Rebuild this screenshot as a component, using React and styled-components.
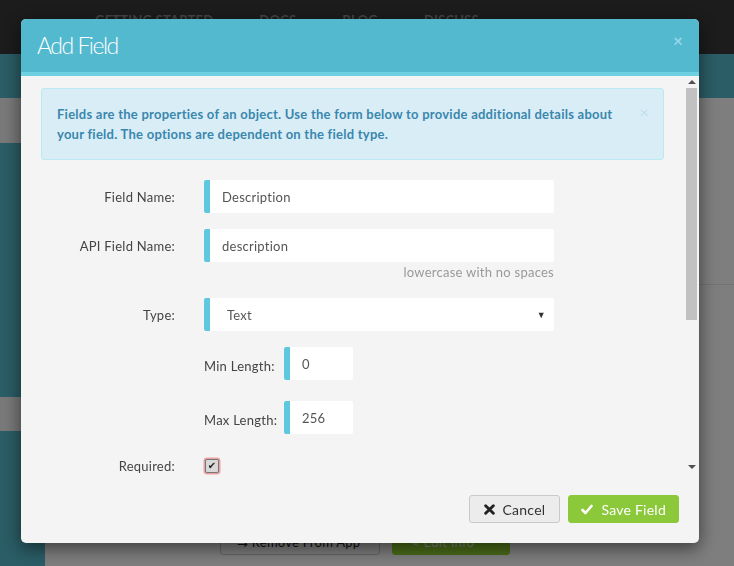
import React from "react";
import styled, { createGlobalStyle } from "styled-components";

const Global = createGlobalStyle`
  html, body { margin: 0; padding: 0; }
  body { font-family: "Lato", "Liberation Sans", sans-serif; overflow: hidden; letter-spacing: 0.25px; }
  * { box-sizing: border-box; }
`;

/* ---------- underlying page ---------- */
const Page = styled.div`
  width: 734px;
  height: 566px;
  display: flex;
  flex-direction: column;
  background: #fdfdfd;
`;
const NavBar = styled.div`
  height: 54px;
  background: #383838;
  display: flex;
  align-items: flex-start;
  padding: 12px 0 0 95px;
  gap: 46px;
`;
const NavLink = styled.span`
  color: #8a8a8a;
  font-weight: 700;
  font-size: 13px;
  letter-spacing: 0.2px;
`;
const HeroBand = styled.div`
  height: 44px;
  background: #55bacc;
`;
const ContentRow = styled.div`
  flex: 1;
  display: flex;
`;
const Sidebar = styled.div`
  width: 45px;
  display: flex;
  flex-direction: column;
`;
const SideBlock = styled.div`
  height: ${(p) => p.$h || "auto"};
  flex: ${(p) => (p.$grow ? 1 : "none")};
  background: ${(p) => (p.$light ? "#f2f2f2" : "#55bacc")};
`;
const Main = styled.div`
  flex: 1;
  display: flex;
  flex-direction: column;
  background: #fdfdfd;
`;
const MainTop = styled.div`
  height: 187px;
  border-bottom: 1px solid #e6e6e6;
`;
const MainRest = styled.div`
  flex: 1;
  display: flex;
  align-items: flex-end;
  gap: 12px;
  padding: 0 0 11px 175px;
`;
const BgButton = styled.div`
  height: 27px;
  border-radius: 3px;
  padding: 0 16px;
  display: flex;
  align-items: center;
  font-size: 13px;
  color: ${(p) => (p.$green ? "#fff" : "#222")};
  background: ${(p) => (p.$green ? "#94d632" : "#fafafa")};
  border: 1px solid ${(p) => (p.$green ? "#94d632" : "#c8c8c8")};
  width: ${(p) => p.$w};
`;
const Overlay = styled.div`
  position: fixed;
  inset: 0;
  background: rgba(0, 0, 0, 0.5);
`;

/* ---------- modal ---------- */
const Modal = styled.div`
  position: fixed;
  top: 19px;
  left: 21px;
  width: 678px;
  height: 524px;
  border-radius: 5px;
  overflow: hidden;
  background: #f4f4f4;
  box-shadow: 0 5px 18px rgba(0, 0, 0, 0.55);
  display: flex;
  flex-direction: column;
`;
const Header = styled.div`
  height: 57px;
  flex: none;
  background: #53b9cf;
  border-bottom: 4px solid #6ccfe2;
  display: flex;
  align-items: center;
  justify-content: space-between;
  padding: 0 16px 2px 16px;
`;
const Title = styled.h2`
  margin: 0;
  font-weight: 300;
  font-size: 23px;
  color: #fff;
  letter-spacing: -1.5px;
`;
const HeaderClose = styled.span`
  color: #93d6e6;
  font-size: 17px;
  font-weight: 700;
  margin-top: -8px;
`;
const BodyWrap = styled.div`
  flex: 1;
  display: flex;
  min-height: 0;
`;
const Body = styled.div`
  flex: 1;
  overflow: hidden;
  padding: 12px 20px 0 20px;
`;
const ScrollBar = styled.div`
  width: 15px;
  flex: none;
  display: flex;
  flex-direction: column;
  align-items: center;
  padding: 0 2px 3px 2px;
`;
const ScrollArrow = styled.div`
  height: 12px;
  width: 100%;
  display: flex;
  align-items: center;
  justify-content: center;
  &::before {
    content: "";
    width: 0;
    height: 0;
    border-left: 4px solid transparent;
    border-right: 4px solid transparent;
    ${(p) => (p.$down ? "border-top: 4px solid #505050;" : "border-bottom: 4px solid #505050;")}
  }
`;
const ScrollTrack = styled.div`
  flex: 1;
  width: 100%;
`;
const ScrollThumb = styled.div`
  width: 100%;
  height: 232px;
  background: #c1c1c1;
`;
const Alert = styled.div`
  position: relative;
  background: #d9edf7;
  border: 1px solid #bce8f1;
  border-radius: 3px;
  padding: 15px 36px 15px 15px;
  color: #3a87ad;
  font-weight: 700;
  font-size: 13px;
  line-height: 20px;
`;
const AlertClose = styled.span`
  position: absolute;
  right: 14px;
  top: 13px;
  color: #bfe0ee;
  font-size: 16px;
  font-weight: 400;
`;
const Form = styled.div`
  padding-top: 20px;
  display: flex;
  flex-direction: column;
`;
const Row = styled.div`
  display: grid;
  grid-template-columns: 134px 350px;
  column-gap: 29px;
  align-items: center;
  margin-bottom: ${(p) => p.$mb ?? 16}px;
`;
const Label = styled.label`
  text-align: right;
  font-size: 13px;
  color: #444;
`;
const Control = styled.div`
  display: flex;
  flex-direction: column;
`;
const Input = styled.div`
  height: 33px;
  width: ${(p) => p.$w || "350px"};
  background: #fff;
  border-left: 6px solid #5ec9de;
  border-radius: 2px;
  display: flex;
  align-items: center;
  justify-content: space-between;
  padding: 0 8px 0 ${(p) => p.$pl || 12}px;
  font-size: 13px;
  color: #555;
`;
const Caret = styled.span`
  font-size: 9px;
  color: #333;
`;
const Help = styled.div`
  text-align: right;
  font-size: 13px;
  color: #999;
  padding-top: 2px;
  height: 36px;
`;
const SubRow = styled.div`
  display: grid;
  grid-template-columns: 80px 69px;
  align-items: center;
  margin-left: 163px;
  margin-bottom: ${(p) => p.$mb ?? 16}px;
`;
const SubLabel = styled.label`
  font-size: 13px;
  color: #444;
  padding-top: 5px;
  white-space: nowrap;
`;
const Check = styled.span`
  width: 14px;
  height: 14px;
  border-radius: 2px;
  background: #d9d9d9;
  border: 1px solid #777;
  box-shadow: 0 0 0 1.5px #e9a2a2;
  display: flex;
  align-items: center;
  justify-content: center;
  font-family: "DejaVu Sans", sans-serif;
  font-size: 10px;
  line-height: 1;
  color: #222;
  margin-left: 1px;
`;
const Footer = styled.div`
  height: 67px;
  flex: none;
  display: flex;
  justify-content: flex-end;
  align-items: flex-start;
  gap: 8px;
  padding: 19px 20px 0 0;
`;
const Button = styled.button`
  height: 28px;
  border-radius: 3px;
  font-family: inherit;
  letter-spacing: 0.25px;
  font-size: 14px;
  display: flex;
  align-items: center;
  gap: 8px;
  padding: 0 ${(p) => (p.$primary ? 12 : 14)}px;
  color: ${(p) => (p.$primary ? "#fff" : "#333")};
  background: ${(p) => (p.$primary ? "#8bc83a" : "#ececec")};
  border: 1px solid ${(p) => (p.$primary ? "#8bc83a" : "#c9c9c9")};
`;

const XIcon = () => (
  <svg width="11" height="11" viewBox="0 0 10 10">
    <path d="M1.5 1.5 L8.5 8.5 M8.5 1.5 L1.5 8.5" stroke="#222" strokeWidth="2.6" strokeLinecap="round" />
  </svg>
);
const CheckIcon = () => (
  <svg width="12" height="11" viewBox="0 0 12 10">
    <path d="M1.5 5.5 L4.5 8.5 L10.5 1.5" fill="none" stroke="#fff" strokeWidth="2.6" strokeLinecap="round" strokeLinejoin="round" />
  </svg>
);

export default function App() {
  return (
    <>
      <Global />
      <Page>
        <NavBar>
          <NavLink>GETTING STARTED</NavLink>
          <NavLink>DOCS</NavLink>
          <NavLink>BLOG</NavLink>
          <NavLink>DISCUSS</NavLink>
        </NavBar>
        <HeroBand />
        <ContentRow>
          <Sidebar>
            <SideBlock $light $h="45px" />
            <SideBlock $h="254px" />
            <SideBlock $light $h="34px" />
            <SideBlock $grow />
          </Sidebar>
          <Main>
            <MainTop />
            <MainRest>
              <BgButton $w="160px">⇆ Remove From App</BgButton>
              <BgButton $green $w="118px">✎ Edit Info</BgButton>
            </MainRest>
          </Main>
        </ContentRow>
      </Page>
      <Overlay />
      <Modal>
        <Header>
          <Title>Add Field</Title>
          <HeaderClose>×</HeaderClose>
        </Header>
        <BodyWrap>
          <Body>
            <Alert>
              Fields are the properties of an object. Use the form below to provide additional details about
              your field. The options are dependent on the field type.
              <AlertClose>×</AlertClose>
            </Alert>
            <Form>
              <Row>
                <Label>Field Name:</Label>
                <Input>Description</Input>
              </Row>
              <Row $mb={0}>
                <Label>API Field Name:</Label>
                <Input>description</Input>
              </Row>
              <Row $mb={0}>
                <span />
                <Help>lowercase with no spaces</Help>
              </Row>
              <Row>
                <Label>Type:</Label>
                <Input $pl={17}>
                  Text
                  <Caret>▼</Caret>
                </Input>
              </Row>
              <SubRow $mb={21}>
                <SubLabel>Min Length:</SubLabel>
                <Input $w="69px">0</Input>
              </SubRow>
              <SubRow $mb={24}>
                <SubLabel>Max Length:</SubLabel>
                <Input $w="69px">256</Input>
              </SubRow>
              <Row>
                <Label>Required:</Label>
                <Control>
                  <Check>✔</Check>
                </Control>
              </Row>
            </Form>
          </Body>
          <ScrollBar>
            <ScrollArrow />
            <ScrollTrack>
              <ScrollThumb />
            </ScrollTrack>
            <ScrollArrow $down />
          </ScrollBar>
        </BodyWrap>
        <Footer>
          <Button>
            <XIcon />
            Cancel
          </Button>
          <Button $primary>
            <CheckIcon />
            Save Field
          </Button>
        </Footer>
      </Modal>
    </>
  );
}
